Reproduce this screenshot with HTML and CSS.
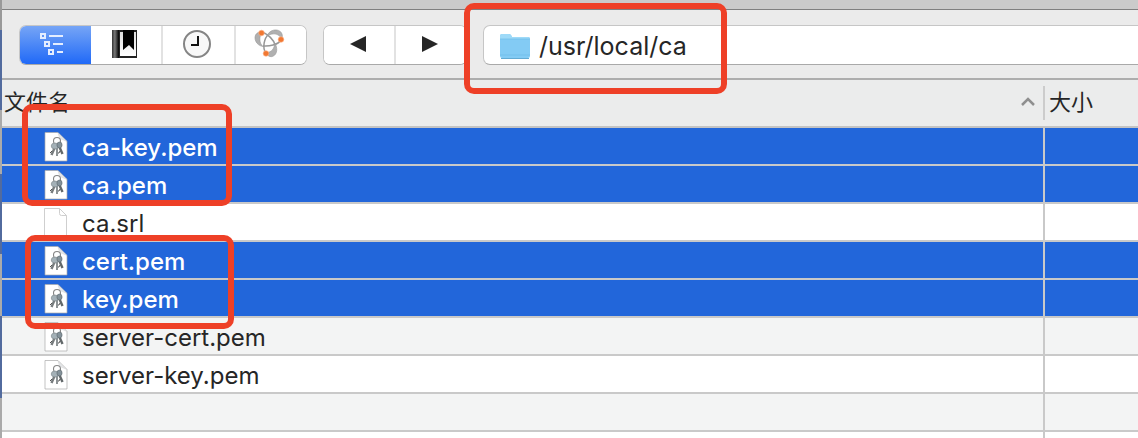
FILE: index.html
```html
<!DOCTYPE html>
<html lang="zh-CN">
  <head>
    <meta charset="UTF-8" />
    <meta name="viewport" content="width=device-width, initial-scale=1.0" />
    <title>/usr/local/ca</title>
    <link rel="stylesheet" href="styles.css">
  </head>
  <body>
    <svg class="symbols" aria-hidden="true">
      <symbol id="page" viewBox="0 0 26 32">
        <path d="M1.5 1.5h15l7 7v21.500h-22z" fill="#fff" stroke="#cfcfcf" />
        <path d="M16.500 1.500v5q0 2 2 2h5z" fill="#fff" stroke="#cfcfcf" />
      </symbol>
      <symbol id="keys" viewBox="0 0 26 32">
        <path d="M2 1.500h13l9 9v19.500H2z" fill="#fff" stroke="#aaa" stroke-width=".7" />
        <path d="M15 2q1 5 3 6l6 2.500z" fill="#e4e6e8" stroke="#ccc" stroke-width=".4" />
        <circle cx="14" cy="10" r="3.500" fill="none" stroke="#858585" stroke-width="1.100" />
        <g fill="none">
          <path d="M12 16l-3.500 8" stroke="#777c7e" stroke-width="2.400" />
          <path d="M14 16v9" stroke="#8c9294" stroke-width="2" />
          <path d="M16 15l3.500 8" stroke="#62686a" stroke-width="2.400" />
          <path d="M9 20l-2 2M15 22h1M17 20l-1 2" stroke="#555" />
        </g>
        <ellipse cx="12" cy="15" rx="3.800" ry="3" fill="#a4b1b7" stroke="#7d868a" stroke-width=".6" />
        <ellipse cx="16.500" cy="14" rx="2.600" ry="3" fill="#84929a" stroke="#5c666b" stroke-width=".6" />
      </symbol>
    </svg>
    <div class="window">
      <div class="titlebar"></div>
      <div class="toolbar">
        <div class="segments">
          <button class="segment active" aria-label="层级">
            <svg width="30" height="24" viewBox="0 0 30 24" fill="none" stroke="#e4edff" stroke-width="2">
              <path d="M2 2h4v4H2zM6 10h4v4H6zM10 18h4v4h-4zM10 4h14M14 12h10M18 20h6" />
            </svg>
          </button>
          <button class="segment" aria-label="书签">
            <svg width="26" height="28" viewBox="0 0 26 28">
              <defs>
                <linearGradient id="spine">
                  <stop offset="0" stop-color="#333" />
                  <stop offset=".4" stop-color="#777" />
                  <stop offset="1" stop-color="#000" />
                </linearGradient>
                <linearGradient id="cover" x2="0" y2="1">
                  <stop offset="0" stop-color="#ddd" />
                  <stop offset="1" stop-color="#fff" />
                </linearGradient>
              </defs>
              <path d="M0 0h25v28H0z" fill="#222" />
              <path d="M0 0h7v28H0z" fill="url(#spine)" />
              <path d="M8 2h16v24H8z" fill="url(#cover)" />
              <path d="M11 0h11v20l-5-5-6 5z" fill="#000" />
            </svg>
          </button>
          <button class="segment" aria-label="历史">
            <svg width="30" height="30" viewBox="0 0 30 30" fill="none">
              <circle cx="15" cy="15" r="13" fill="#f8f8f8" stroke="#858585" stroke-width="2" />
              <path d="M16 7v9H9" stroke="#111" stroke-width="2" />
            </svg>
          </button>
          <button class="segment" aria-label="网络">
            <svg width="32" height="30" viewBox="0 0 32 30">
              <g fill="none" stroke="#979797" stroke-width="1.500">
                <path d="M9 17C15 17.500 24 16 27 11" />
                <path d="M8 3C14 5 20 11 21 16" />
                <path d="M12 24C8 19 10 9 15 5" />
              </g>
              <g fill="#b0b0b0" stroke="#999" stroke-width=".6">
                <path d="M8 3C-2 2-1 16 9 17.500C5 14 5 8 8 3z" />
                <path d="M13 7C16-2 31-1 28 10C25 5 20 3 13 7z" />
                <path d="M12 24C16 32 27 26 21 14C20 20 18 23 12 24z" />
              </g>
              <g fill="#f17832" stroke="#ffb58c" stroke-width=".6">
                <circle cx="7.500" cy="4" r="2.800" />
                <circle cx="27" cy="10.500" r="2.800" />
                <circle cx="12" cy="24.500" r="2.800" />
              </g>
            </svg>
          </button>
        </div>
        <div class="segments nav">
          <button class="segment" aria-label="后退">
            <svg width="16" height="16" viewBox="0 0 16 16"><path d="M16 0v16L0 8z" fill="#262626" /></svg>
          </button>
          <button class="segment" aria-label="前进">
            <svg width="16" height="16" viewBox="0 0 16 16"><path d="M0 0v16l16-8z" fill="#262626" /></svg>
          </button>
        </div>
        <label class="path">
          <svg width="32" height="28" viewBox="0 0 32 28">
            <path d="M1 4q0-2 2-2h7q1 0 2 1l1 2h16q2 0 2 2v17q0 2-2 2H3q-2 0-2-2z" fill="#83cbf4" />
            <path d="M1 7V4q0-2 2-2h7q1 0 2 1l1 2h16q2 0 2 2z" fill="#9edaf8" />
            <path d="M1 7h30M1 23h30" stroke="#6fbce8" stroke-width=".7" />
            <path d="M2 26.500h28" stroke="#63abd4" />
          </svg>
          <input type="text" value="/usr/local/ca" aria-label="路径" />
        </label>
      </div>
      <table class="files">
        <thead>
          <tr>
            <th class="name">
              <div class="heading">
                文件名
                <svg width="16" height="12" viewBox="0 0 16 12" fill="none"><path d="M2 9l6-6 6 6" stroke="#8f8f8f" stroke-width="2.500" /></svg>
              </div>
            </th>
            <th class="size">大小</th>
          </tr>
        </thead>
        <tbody>
          <tr class="selected">
            <td><div class="file"><svg class="icon"><use href="#keys" /></svg>ca-key.pem</div></td>
            <td></td>
          </tr>
          <tr class="selected">
            <td><div class="file"><svg class="icon"><use href="#keys" /></svg>ca.pem</div></td>
            <td></td>
          </tr>
          <tr>
            <td><div class="file"><svg class="icon"><use href="#page" /></svg>ca.srl</div></td>
            <td></td>
          </tr>
          <tr class="selected">
            <td><div class="file"><svg class="icon"><use href="#keys" /></svg>cert.pem</div></td>
            <td></td>
          </tr>
          <tr class="selected">
            <td><div class="file"><svg class="icon"><use href="#keys" /></svg>key.pem</div></td>
            <td></td>
          </tr>
          <tr>
            <td><div class="file"><svg class="icon"><use href="#keys" /></svg>server-cert.pem</div></td>
            <td></td>
          </tr>
          <tr>
            <td><div class="file"><svg class="icon"><use href="#keys" /></svg>server-key.pem</div></td>
            <td></td>
          </tr>
          <tr><td></td><td></td></tr>
        </tbody>
      </table>
    </div>
    <div class="mark mark-path"></div>
    <div class="mark mark-ca"></div>
    <div class="mark mark-cert"></div>
  </body>
</html>
```
FILE: styles.css
```css
* {
  box-sizing: border-box;
}

body {
  margin: 0;
  min-height: 100vh;
  display: flex;
  position: relative;
  font-family: Inter, "Noto Sans CJK SC", sans-serif;
  font-size: 24px;
  color: #262626;
  background: linear-gradient(#999 0 30px, #526b9e 30px 110px, #aaa 110px 174px, #526b9e 174px 254px, #aaa 254px 316px, #526b9e 316px 398px, #aaa 398px);
}

.symbols {
  display: none;
}

/* the empty part of the list continues the column line */
.window {
  flex: 1;
  margin-left: 2px;
  background: linear-gradient(#c9c9c9, #c9c9c9) right 93px top / 2px 100% no-repeat #fff;
}

.titlebar {
  height: 10px;
  background: #cbcbcb;
  border-bottom: 1px solid #808080;
}

.toolbar {
  display: flex;
  height: 70px;
  padding: 15px 0 13px 17px;
  background: #ebebeb;
  border-bottom: 2px solid #adadad;
}

.segments {
  display: flex;
  width: 288px;
  height: 40px;
  background: #fff;
  border: 1px solid #c6c6c6;
  border-bottom-color: #a9a9a9;
  border-radius: 7px;
  overflow: hidden;
}

.nav {
  width: 144px;
  margin: 0 16px;
}

.segment {
  flex: 1;
  display: flex;
  align-items: center;
  justify-content: center;
  padding: 0 2px 2px 0;
  border: none;
  background: #fff;
}

.segment + .segment {
  border-left: 2px solid #e2e2e2;
}

.segment.active {
  background: linear-gradient(#76a5f6, #2069f7);
}

.segment.active + .segment {
  border-left: none;
}

.path {
  flex: 1;
  display: flex;
  align-items: center;
  gap: 8px;
  height: 40px;
  padding: 2px 0 0 15px;
  background: #fff;
  border: 1px solid #c6c6c6;
  border-right: none;
  border-bottom-color: #a9a9a9;
  border-radius: 7px 0 0 7px;
}

.path input {
  flex: 1;
  min-width: 0;
  padding: 0;
  border: none;
  outline: none;
  background: none;
  font: inherit;
  font-size: 25px;
  color: inherit;
}

.files {
  width: 100%;
  table-layout: fixed;
  border-collapse: separate;
  border-spacing: 0;
}

.files th {
  height: 48px;
  padding: 0 0 2px 2px;
  background: #ebecec;
  border-bottom: 2px solid #c3c3c3;
  font-size: 22px;
  font-weight: normal;
  line-height: 32px;
  text-align: left;
}

.heading {
  display: flex;
  align-items: center;
  justify-content: space-between;
  padding-right: 7px;
}

.files .size {
  width: 95px;
  padding-left: 6px;
  background: linear-gradient(#ccc, #ccc) 0 6px / 2px 34px no-repeat #ebecec;
}

.files td {
  height: 38px;
  padding: 0;
  border-bottom: 2px solid #c9c9c9;
}

.files td + td {
  border-left: 2px solid #c9c9c9;
}

.files tbody tr {
  background: #fff;
}

.files tbody tr:nth-child(even) {
  background: #f3f4f4;
}

.files tbody tr.selected {
  background: #2266da;
  color: #fff;
  font-weight: 500;
}

.file {
  display: flex;
  align-items: center;
  gap: 13px;
  padding: 2px 0 0 41px;
}

.icon {
  width: 26px;
  height: 32px;
}

/* red highlight frames */
.mark {
  position: absolute;
  border: 6px solid #ee4027;
  border-radius: 10px;
  pointer-events: none;
}

.mark-path {
  left: 464px;
  top: 3px;
  width: 263px;
  height: 91px;
}

.mark-ca {
  left: 22px;
  top: 104px;
  width: 210px;
  height: 102px;
}

.mark-cert {
  left: 25px;
  top: 235px;
  width: 209px;
  height: 94px;
}
```
